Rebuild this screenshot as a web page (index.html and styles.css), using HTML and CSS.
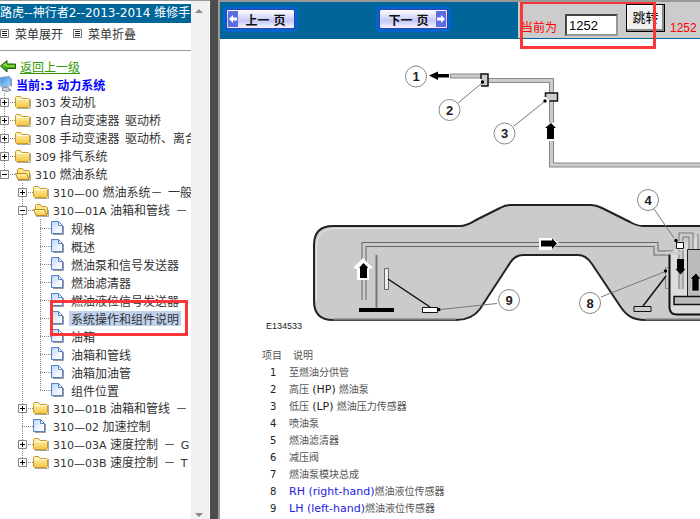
FILE: index.html
```html
<!DOCTYPE html>
<html lang="zh-CN">
<head>
    <meta charset="utf-8">
    <title>路虎--神行者2--2013-2014 维修手册</title>
    <link rel="stylesheet" href="styles.css">
</head>

<body>

<!-- shared icons -->
<svg class="sprite" width="0" height="0" aria-hidden="true">
    <defs>
        <linearGradient id="gold" x1="0" y1="0" x2="0" y2="1">
            <stop offset="0" stop-color="#fff6b8"/>
            <stop offset="1" stop-color="#f5c544"/>
        </linearGradient>
        <linearGradient id="paper" x1="0" y1="0" x2="1" y2="1">
            <stop offset="0" stop-color="#b9d5fb"/>
            <stop offset="0.7" stop-color="#f6faff"/>
        </linearGradient>
        <linearGradient id="screen" x1="0" y1="0" x2="1" y2="1">
            <stop offset="0" stop-color="#2f86e0"/>
            <stop offset="1" stop-color="#a6e4ff"/>
        </linearGradient>
    </defs>
    <symbol id="folder" viewBox="0 0 16 16">
        <path d="M2 14.500h13.500V5" fill="none" stroke="#aaa"/>
        <path d="M.5 12.500V3.500l1-1h4l1.500 2h6.500l1 1v7l-1 1h-12z" fill="url(#gold)" stroke="#c79a2c"/>
        <path d="M1.500 5.500h12" stroke="#fffbe0"/>
    </symbol>
    <symbol id="folder-open" viewBox="0 0 16 16">
        <path d="M3 14.500h12.500V8" fill="none" stroke="#aaa"/>
        <path d="M2.500 12.500V3.500l1-1h4l1.500 2h4.500l1 1v7z" fill="#fbe48a" stroke="#c79a2c"/>
        <path d="M.5 7.500h11l2.500 6H3z" fill="url(#gold)" stroke="#b98a1c"/>
    </symbol>
    <symbol id="doc" viewBox="0 0 16 16">
        <path d="M2 14.500h10.500V6" fill="none" stroke="#999"/>
        <path d="M.5 1.500h7l4 4v8H.5z" fill="url(#paper)" stroke="#5b7fc4"/>
        <path d="M7.500 1.500v4h4z" fill="#fff" stroke="#5b7fc4"/>
    </symbol>
    <symbol id="plus" viewBox="0 0 9 9">
        <path d="M.5.5h8v8h-8z" fill="#fff" stroke="#848484"/>
        <path d="M2 4.500h5M4.500 2v5" stroke="#000"/>
    </symbol>
    <symbol id="minus" viewBox="0 0 9 9">
        <path d="M.5.5h8v8h-8z" fill="#fff" stroke="#848484"/>
        <path d="M2 4.500h5" stroke="#000"/>
    </symbol>
    <symbol id="list" viewBox="0 0 9 9">
        <path d="M.5.5h8v8h-8z" fill="#fff" stroke="#777"/>
        <path d="M2 2.500h5M2 4.500h5M2 6.500h5" stroke="#222"/>
    </symbol>
</svg>

<div class="frames">

    <aside class="sidebar">
        <div class="menu">
            <h1 class="menu-title">路虎--神行者2--2013-2014 维修手册</h1>

            <div class="menu-tools">
                <button type="button" class="tool"><svg width="9" height="9"><use href="#list"/></svg>菜单展开</button>
                <button type="button" class="tool"><svg width="9" height="9"><use href="#list"/></svg>菜单折叠</button>
            </div>

            <a class="back" href="#">
                <svg width="16" height="14" viewBox="0 0 16 14"><path d="M.5 7 7 1.500v3.500h8.500v4.500H7V13z" fill="#39b01d" stroke="#1d5c12"/><path d="M3 7l3-2.500V7h9" fill="none" stroke="#d6e94a"/></svg>
                <span>返回上一级</span>
            </a>
            <div class="current">
                <svg width="13" height="16" viewBox="0 0 13 16"><path d="M0 1.500 9.500.5l1 9L1 11z" fill="url(#screen)" stroke="#8fa4c8"/><path d="M10 1l2 2v7l-1.500 1z" fill="#8c9cc0"/><path d="M3 11.500l5-.5 1 2 2 1-4 1.500-5-1z" fill="#c9cfdd" stroke="#8089a5"/></svg>
                <span>当前:3 动力系统</span>
            </div>

            <ul class="tree">
                <li><div class="row"><button type="button" class="toggle" aria-label="展开"><svg width="9" height="9"><use href="#plus"/></svg></button><svg class="icon" width="16" height="16"><use href="#folder"/></svg><a href="#"><span class="code">303 </span>发动机</a></div></li>
                <li><div class="row"><button type="button" class="toggle" aria-label="展开"><svg width="9" height="9"><use href="#plus"/></svg></button><svg class="icon" width="16" height="16"><use href="#folder"/></svg><a href="#"><span class="code">307 </span>自动变速器&nbsp; 驱动桥</a></div></li>
                <li><div class="row"><button type="button" class="toggle" aria-label="展开"><svg width="9" height="9"><use href="#plus"/></svg></button><svg class="icon" width="16" height="16"><use href="#folder"/></svg><a href="#"><span class="code">308 </span>手动变速器&nbsp; 驱动桥、离合</a></div></li>
                <li><div class="row"><button type="button" class="toggle" aria-label="展开"><svg width="9" height="9"><use href="#plus"/></svg></button><svg class="icon" width="16" height="16"><use href="#folder"/></svg><a href="#"><span class="code">309 </span>排气系统</a></div></li>
                <li>
                    <div class="row"><button type="button" class="toggle" aria-label="折叠"><svg width="9" height="9"><use href="#minus"/></svg></button><svg class="icon" width="16" height="16"><use href="#folder-open"/></svg><a href="#"><span class="code">310 </span>燃油系统</a></div>
                    <ul>
                        <li><div class="row"><button type="button" class="toggle" aria-label="展开"><svg width="9" height="9"><use href="#plus"/></svg></button><svg class="icon" width="16" height="16"><use href="#folder"/></svg><a href="#"><span class="code">310—00 </span>燃油系统－&nbsp; 一般</a></div></li>
                        <li>
                            <div class="row"><button type="button" class="toggle" aria-label="折叠"><svg width="9" height="9"><use href="#minus"/></svg></button><svg class="icon" width="16" height="16"><use href="#folder-open"/></svg><a href="#"><span class="code">310—01A </span>油箱和管线&nbsp; －</a></div>
                            <ul>
                                <li><div class="row"><svg class="icon" width="16" height="16"><use href="#doc"/></svg><a href="#">规格</a></div></li>
                                <li><div class="row"><svg class="icon" width="16" height="16"><use href="#doc"/></svg><a href="#">概述</a></div></li>
                                <li><div class="row"><svg class="icon" width="16" height="16"><use href="#doc"/></svg><a href="#">燃油泵和信号发送器</a></div></li>
                                <li><div class="row"><svg class="icon" width="16" height="16"><use href="#doc"/></svg><a href="#">燃油滤清器</a></div></li>
                                <li><div class="row"><svg class="icon" width="16" height="16"><use href="#doc"/></svg><a href="#">燃油液位信号发送器</a></div></li>
                                <li><div class="row marked"><svg class="icon" width="16" height="16"><use href="#doc"/></svg><a class="selected" href="#">系统操作和组件说明</a></div></li>
                                <li><div class="row"><svg class="icon" width="16" height="16"><use href="#doc"/></svg><a href="#">油箱</a></div></li>
                                <li><div class="row"><svg class="icon" width="16" height="16"><use href="#doc"/></svg><a href="#">油箱和管线</a></div></li>
                                <li><div class="row"><svg class="icon" width="16" height="16"><use href="#doc"/></svg><a href="#">油箱加油管</a></div></li>
                                <li><div class="row"><svg class="icon" width="16" height="16"><use href="#doc"/></svg><a href="#">组件位置</a></div></li>
                            </ul>
                        </li>
                        <li><div class="row"><button type="button" class="toggle" aria-label="展开"><svg width="9" height="9"><use href="#plus"/></svg></button><svg class="icon" width="16" height="16"><use href="#folder"/></svg><a href="#"><span class="code">310—01B </span>油箱和管线&nbsp; －</a></div></li>
                        <li><div class="row"><svg class="icon" width="16" height="16"><use href="#doc"/></svg><a href="#"><span class="code">310—02 </span>加速控制</a></div></li>
                        <li><div class="row"><button type="button" class="toggle" aria-label="展开"><svg width="9" height="9"><use href="#plus"/></svg></button><svg class="icon" width="16" height="16"><use href="#folder"/></svg><a href="#"><span class="code">310—03A </span>速度控制&nbsp; －&nbsp; <span class="code">G</span></a></div></li>
                        <li><div class="row"><button type="button" class="toggle" aria-label="展开"><svg width="9" height="9"><use href="#plus"/></svg></button><svg class="icon" width="16" height="16"><use href="#folder"/></svg><a href="#"><span class="code">310—03B </span>速度控制&nbsp; －&nbsp; <span class="code">T</span></a></div></li>
                    </ul>
                </li>
            </ul>
        </div>

        <div class="scrollbar" aria-hidden="true">
            <svg width="8" height="4" viewBox="0 0 8 4"><path d="M0 4 4 0l4 4z" fill="#8a8a8a"/></svg>
            <svg width="8" height="4" viewBox="0 0 8 4"><path d="M0 0h8L4 4z" fill="#8a8a8a"/></svg>
        </div>
    </aside>

    <div class="splitter"></div>

    <main class="content">
        <header class="pager">
            <div>
                <button type="button" class="page-btn prev"><svg width="10" height="16" viewBox="0 0 10 16"><path d="M0 0h10v16H0z" fill="#5a6ee0"/><path d="M1 8 5 4v2.500h4v3H5V12z" fill="#fff"/></svg><span>上一 页</span></button>
            </div>
            <div>
                <button type="button" class="page-btn next"><span>下一 页</span><svg width="10" height="16" viewBox="0 0 10 16"><path d="M0 0h10v16H0z" fill="#5a6ee0"/><path d="M9 8 5 4v2.500H1v3h4V12z" fill="#fff"/></svg></button>
            </div>
            <form class="jump">
                <label for="page">当前为</label>
                <input type="text" id="page" name="page" value="1252">
                <button type="button">跳转</button>
                <span class="total">1252</span>
            </form>
        </header>

        <svg class="diagram" width="480" height="308" viewBox="220 39 480 308" role="img" aria-label="燃油系统">
            <!-- supply pipe -->
            <g fill="none" stroke-linejoin="miter">
                <path d="M450 76h32M488 80.500h63.500v42M551.500 141v24H700" stroke="#888" stroke-width="5"/>
                <path d="M451 76h31M488 80.500h63.500v42M551.500 141v24H700" stroke="#ccc" stroke-width="3"/>
            </g>
            <path d="M429 75.500l9-4v2.500h11v3.500h-11V80z"/>
            <path d="M481 79v-5h7v12h-7" fill="#ccc" stroke="#111" stroke-width="1.500"/>
            <path d="M545.500 97v-4h12v8h-8" fill="#ccc" stroke="#111" stroke-width="1.500"/>
            <path d="M551 123l5 5h-2v11h-7v-11h-2z"/>

            <!-- tank -->
            <path d="M333 226H460C468 226 472 222 478 219L500 208Q505 205 510 205H591Q596 205 602 208L630 222Q637 226 643 226H710V320H645C632 320 626 315 620 306L592 264Q586 255 578 255H523Q515 255 510 263L480 309Q472 320 456 320H333Q314 320 314 301V245Q314 226 333 226Z" fill="#cbcbcb" stroke="#222" stroke-width="2"/>
            <path d="M316.500 300V246Q317 229 334 228.500H460" fill="none" stroke="#e6e6e6"/>
            <path d="M333 319.500H456M645 319.500H710" stroke="#777" stroke-width="2"/>

            <!-- transfer line -->
            <path d="M364 300V244.500H656V253H681" fill="none" stroke="#666" stroke-width="5"/>
            <path d="M364 301V244.500H656V253H681" fill="none" stroke="#ccc" stroke-width="3"/>
            <path d="M363 258l10 10-4 1v11H357v-11l-4-1z" fill="#fff"/>
            <path d="M363.500 263l5 5h-1.500v10h-7v-10H359z"/>
            <path d="M539 238h12l8 5-8 7h-12z" fill="#fff"/>
            <path d="M541 240.500h11v-2l5 5-5 5.500v-2.500h-11z"/>
            <path d="M376.500 255v53" stroke="#777" stroke-width="2"/>
            <path d="M359 308h35v4h-35z"/>

            <!-- left level sensor -->
            <path d="M384.500 268.500h4v21h-4z" fill="#eee" stroke="#666"/>
            <path d="M388 279l42 28" stroke="#111" stroke-width="1.500"/>
            <path d="M422.500 307.500h15v5h-15z" fill="#fff" stroke="#111"/>
            <circle cx="439" cy="309.500" r="1.700"/>

            <!-- swirl pot, pump and right level sensor -->
            <path d="M669.500 253V308Q670 314.500 677 314.500H710V229" fill="#dcdcdc" stroke="none"/>
            <path d="M669.500 253V308Q670 314.500 677 314.500H710" fill="none" stroke="#111" stroke-width="2"/>
            <path d="M681 241v-6h10v14M681 250v39M700 234v15" fill="none" stroke="#777" stroke-width="5"/>
            <path d="M681 241v-6h10v15M681 250v40M700 234v15" fill="none" stroke="#ccc" stroke-width="3"/>
            <path d="M666 253h15" stroke="#ccc" stroke-width="3"/>
            <path d="M676.500 242.500h7v6h-7z" fill="#fff" stroke="#111"/>
            <path d="M687.500 249.500H710v47h-22.500z" fill="#bbb" stroke="#222"/>
            <path d="M674 296.500h30v8h-30z" fill="#bbb" stroke="#111" stroke-width="1.500"/>
            <path d="M677 259h7v10h1.500l-5 5.500-5-5.500h1.500z"/>
            <path d="M696 273l5 6h-2v12h-7v-12h-2z" stroke="#fff" stroke-width=".5"/>
            <path d="M668 267.500h-2.500v21h2.500" fill="none" stroke="#888"/>
            <path d="M666 276l-23 30" stroke="#111" stroke-width="1.500"/>
            <path d="M634 306.500h17v5h-17z" fill="#ccc" stroke="#111"/>

            <!-- callouts -->
            <path d="M458 103l24-20M514 126l30-24M654 209l20 29M601 297l63-25M440 309.500l57-6" fill="none" stroke="#777"/>
            <circle cx="482.500" cy="82" r="1.700"/>
            <circle cx="545" cy="101" r="1.700"/>
            <circle cx="676" cy="240.500" r="1.700"/>
            <circle cx="665.500" cy="271" r="1.700"/>
            <g class="callouts">
                <circle cx="416" cy="76.500" r="10.500"/><text x="416" y="81">1</text>
                <circle cx="449.500" cy="110" r="10.500"/><text x="449.500" y="115">2</text>
                <circle cx="504.500" cy="133.500" r="10.500"/><text x="504.500" y="138">3</text>
                <circle cx="648" cy="200" r="10.500"/><text x="648" y="205">4</text>
                <circle cx="590" cy="303" r="10.500"/><text x="590" y="308">8</text>
                <circle cx="509" cy="300" r="10.500"/><text x="509" y="305">9</text>
            </g>
            <text class="figure-id" x="266" y="329">E134533</text>
        </svg>

        <table class="legend">
            <thead>
                <tr><th>项目</th><th>说明</th></tr>
            </thead>
            <tbody>
                <tr><td>1</td><td>至燃油分供管</td></tr>
                <tr><td>2</td><td>高压 <b>(HP)</b> 燃油泵</td></tr>
                <tr><td>3</td><td>低压 <b>(LP)</b> 燃油压力传感器</td></tr>
                <tr><td>4</td><td>喷油泵</td></tr>
                <tr><td>5</td><td>燃油滤清器</td></tr>
                <tr><td>6</td><td>减压阀</td></tr>
                <tr><td>7</td><td>燃油泵模块总成</td></tr>
                <tr><td>8</td><td><a href="#">RH (right-hand)</a>燃油液位传感器</td></tr>
                <tr><td>9</td><td><a href="#">LH (left-hand)</a>燃油液位传感器</td></tr>
            </tbody>
        </table>

        <div class="jump-mark"></div>
    </main>

</div>

</body>
</html>
```

FILE: styles.css
```css
*,
*::after {
    box-sizing: border-box;
}

body {
    margin: 0;
    font-family: "DejaVu Sans", "Noto Sans CJK SC", sans-serif;
    font-size: 12px;
    color: #333;
    background-color: #fff;
}

button {
    font-family: inherit;
    cursor: pointer;
}

.sprite {
    position: absolute;
}

.frames {
    display: flex;
    height: 100vh;
    overflow: hidden;
}

/* left frame */

.sidebar {
    display: flex;
    flex: none;
    width: 210px;
    border-top: 1px solid #999;
}

.menu {
    flex: 1;
    min-width: 0;
    padding-top: 3px;
    overflow: hidden;
    white-space: nowrap;
}

.menu-title {
    margin: 0;
    font-size: 12px;
    font-weight: normal;
    line-height: 19px;
    color: #fff;
    background-color: #069;
}

.menu-tools {
    display: flex;
    gap: 10px;
    height: 28px;
    margin-bottom: 6px;
    border-bottom: 1px solid #999;
}

.tool {
    display: flex;
    align-items: center;
    gap: 6px;
    height: 20px;
    padding: 0;
    font-size: 12px;
    color: #333;
    background: none;
    border: none;
}

.back,
.current {
    display: flex;
    align-items: center;
    gap: 4px;
    height: 18px;
    color: #390;
}

.back {
    text-decoration: none;
}

.back span {
    text-decoration: underline;
}

.current {
    gap: 3px;
    font-weight: bold;
    color: #00f;
}

.code {
    font-family: "DejaVu Sans", "Noto Sans CJK SC", sans-serif;
    font-size: 11px;
}

.tree,
.tree ul {
    margin: 0;
    padding: 0;
    list-style: none;
}

.tree ul {
    padding-left: 18px;
}

/* dotted branch lines */
.tree li {
    background: repeating-linear-gradient(#888 0 1px, transparent 1px 2px) 4px 0 / 1px 100% no-repeat;
}

.tree li:last-child {
    background-size: 1px 9px;
}

.row {
    display: flex;
    align-items: center;
    height: 18px;
    padding-left: 15px;
    background: repeating-linear-gradient(90deg, #888 0 1px, transparent 1px 2px) 4px 9px / 11px 1px no-repeat;
}

.toggle {
    display: flex;
    width: 9px;
    height: 9px;
    margin: 0 6px 0 -15px;
    padding: 0;
    background: none;
    border: none;
}

.icon {
    flex: none;
    margin-right: 2px;
}

.row a {
    padding: 0 2px;
    font-family: "Noto Sans CJK SC", sans-serif;
    line-height: 15px;
    color: #333;
    text-decoration: none;
}

.row a.selected {
    background-color: #c1d2ee;
}

/* red frame over the selected entry */
.marked {
    position: relative;
}

.marked::after {
    content: "";
    position: absolute;
    top: -9px;
    left: 14px;
    width: 138px;
    height: 36px;
    border: 3px solid #fa3638;
    pointer-events: none;
}

.scrollbar {
    display: flex;
    flex-direction: column;
    justify-content: space-between;
    align-items: center;
    width: 19px;
    padding: 8px 3px 2px 0;
    background-color: #f0f0f0;
    border-right: 1px solid #fff;
}

.splitter {
    flex: none;
    width: 10px;
    background-color: #4d4d4d;
    border-right: 2px solid #999;
}

/* right frame */

.content {
    position: relative;
    flex: 1;
    min-width: 0;
    overflow: hidden;
    border-top: 2px solid #999;
}

.pager {
    display: grid;
    grid-template-columns: 153px 145px 1fr;
    height: 37px;
    padding-bottom: 1px;
    background-color: #069;
}

.pager > div {
    padding: 5px 4px;
}

.page-btn {
    display: flex;
    align-items: center;
    justify-content: space-between;
    width: 69px;
    height: 20px;
    margin: 2px;
    padding: 0 1px;
    font-size: 12px;
    font-weight: bold;
    color: #111;
    background: linear-gradient(#fff, #c4c8f8 60%, #f4f4ff);
    border: 1px solid #3c3cb4;
    border-radius: 2px;
    outline: 3px solid #06c;
}

.page-btn span {
    flex: 1;
    text-align: center;
}

.jump {
    display: flex;
    align-items: flex-start;
    padding: 2px 0 0 3px;
    font-family: "Liberation Sans", "Noto Sans CJK SC", sans-serif;
    color: #f00;
    background-color: #ccc;
    white-space: nowrap;
}

.jump label {
    margin-right: 8px;
    padding-top: 15px;
    line-height: 18px;
}

.jump input {
    width: 53px;
    height: 22px;
    margin-top: 10px;
    padding: 0 2px;
    font-family: inherit;
    font-size: 13px;
    border: 2px inset #999;
    background-color: #fff;
}

.jump button {
    width: 39px;
    height: 28px;
    margin: 0 5px 0 8px;
    padding: 0 0 3px;
    font-size: 13px;
    color: #000;
    background-color: #f0f0f0;
    border: 1px solid #000;
    box-shadow: inset -2px -2px #888, inset 1px 1px #fff;
}

.total {
    padding-top: 15px;
    font-size: 12px;
    line-height: 18px;
}

.jump-mark {
    position: absolute;
    top: -1px;
    left: 300px;
    width: 136px;
    height: 48px;
    border: 3px solid #fa3638;
    pointer-events: none;
}

.diagram {
    display: block;
}

.callouts circle {
    fill: #fff;
    stroke: #888;
}

.callouts text {
    font-family: "Liberation Sans", sans-serif;
    font-size: 13px;
    font-weight: bold;
    text-anchor: middle;
    fill: #222;
}

.figure-id {
    font-family: "Liberation Sans", sans-serif;
    font-size: 9px;
    fill: #222;
}

.legend {
    margin-left: 42px;
    border-collapse: collapse;
    font-size: 10px;
    line-height: 17px;
    color: #555;
}

.legend th,
.legend td {
    height: 17px;
    padding: 0;
    font-weight: normal;
    text-align: left;
    white-space: nowrap;
}

.legend th + th {
    padding-left: 4px;
}

.legend td:first-child {
    width: 27px;
    padding-left: 8px;
    color: #222;
}

.legend b,
.legend a {
    font-size: 11px;
    line-height: 15px;
}

.legend b {
    font-weight: normal;
    color: #222;
}

.legend a {
    color: #22d;
    text-decoration: none;
}
```
